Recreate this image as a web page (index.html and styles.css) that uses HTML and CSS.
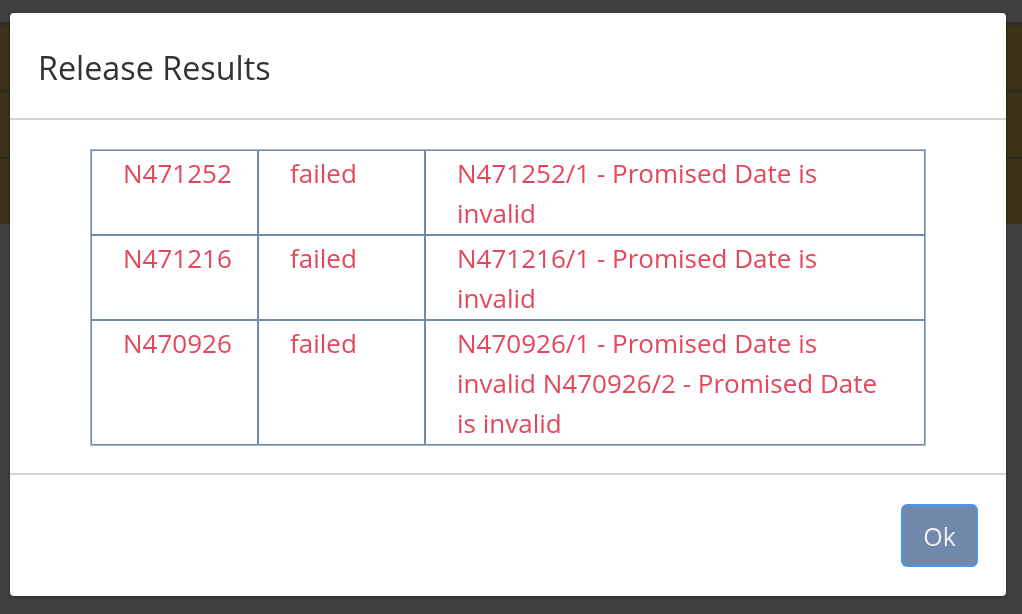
FILE: index.html
```html
<!DOCTYPE html>
<html>
<head>
<meta charset="utf-8">
<link rel="stylesheet" href="styles.css">
</head>
<body>
<div class="page">
  <div class="topbar"></div>
  <div class="band">
    <div class="band-row"></div>
    <div class="band-row"></div>
    <div class="band-row last"></div>
  </div>
</div>
<div class="modal">
  <div class="modal-header">
    <h4 class="modal-title">Release Results</h4>
  </div>
  <div class="modal-body">
    <table class="results">
      <colgroup>
        <col class="col-id">
        <col class="col-status">
        <col>
      </colgroup>
      <tr>
        <td>N471252</td>
        <td>failed</td>
        <td>N471252/1 - Promised Date is invalid</td>
      </tr>
      <tr>
        <td>N471216</td>
        <td>failed</td>
        <td>N471216/1 - Promised Date is invalid</td>
      </tr>
      <tr>
        <td>N470926</td>
        <td>failed</td>
        <td>N470926/1 - Promised Date is invalid N470926/2 - Promised Date is invalid</td>
      </tr>
    </table>
  </div>
  <div class="modal-footer">
    <button class="btn-ok">Ok</button>
  </div>
</div>
</body>
</html>
```

FILE: styles.css
```css
html, body {
  margin: 0;
  padding: 0;
}
body {
  background: #404040;
  width: 1022px;
  height: 614px;
  overflow: hidden;
  font-family: "Open Sans", "Noto Sans", sans-serif;
}
.page {
  display: flex;
  flex-direction: column;
}
.topbar {
  height: 22px;
  border-bottom: 3px solid #2c2c2c;
}
.band {
  background: #3b3219;
  display: flex;
  flex-direction: column;
}
.band-row {
  height: 65px;
  border-bottom: 2px solid #2c291f;
}
.band-row.last {
  border-bottom: none;
  height: 65px;
}
.modal {
  position: fixed;
  left: 10px;
  top: 13px;
  width: 996px;
  background: #fff;
  border-radius: 4px;
  box-shadow: 0 1px 4px rgba(0,0,0,0.35);
}
.modal-header {
  display: flex;
  align-items: center;
  padding: 3px 28px 0;
  border-bottom: 2px solid #d4d4d4;
  box-sizing: border-box;
  height: 107px;
}
.modal-title {
  margin: 0;
  font-size: 32.3px;
  font-weight: 400;
  color: #333;
}
.modal-body {
  padding: 29px 80px 27px;
}
.results {
  width: 100%;
  table-layout: fixed;
  border-collapse: separate;
  border-spacing: 0;
  border: 1px solid #a8b6cc;
}
.col-id, .col-status {
  width: 167px;
}
.results td {
  border: 1px solid #7189ad;
  vertical-align: top;
  color: #e3475c;
  font-size: 26px;
  line-height: 40px;
  padding: 2px 31px 1px 31px;
}
.modal-footer {
  border-top: 2px solid #d4d4d4;
  display: flex;
  justify-content: flex-end;
  padding: 29px 28px 29px;
}
.btn-ok {
  width: 77px;
  height: 63px;
  background: #7088aa;
  border: 2px solid #4b95ee;
  border-radius: 6px;
  color: #eceef2;
  font-family: "Open Sans", "Noto Sans", sans-serif;
  font-size: 25px;
  padding: 0;
}
```
